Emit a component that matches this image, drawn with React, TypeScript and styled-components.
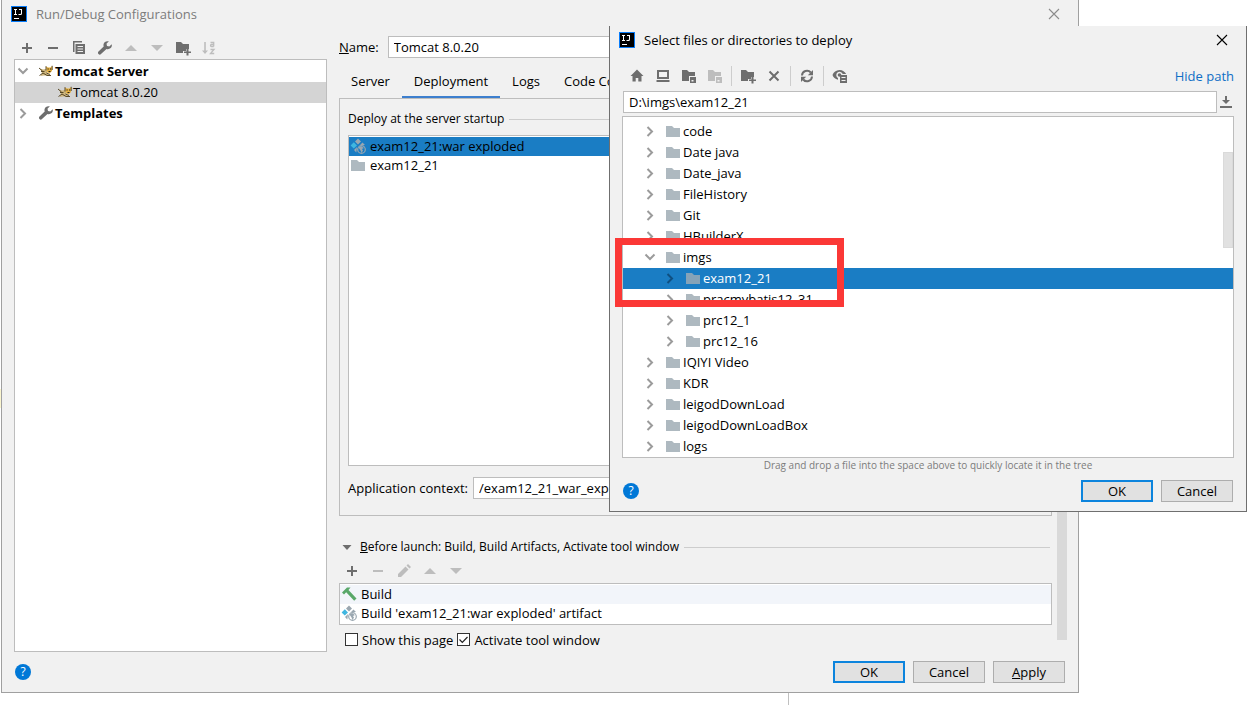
import React, { ReactNode } from "react";
import styled, { createGlobalStyle, css } from "styled-components";

const GlobalStyle = createGlobalStyle`
  * { box-sizing: border-box; }
  body {
    margin: 0;
    background: #ffffff;
    color: #000000;
    font-family: "Open Sans", "Noto Sans", sans-serif;
    font-size: 13px;
    line-height: 20px;
  }
  button, input { font: inherit; color: inherit; }
  ul { list-style: none; margin: 0; padding: 0; }
  svg { display: block; flex: none; }
`;

/* ---------- Icons ---------- */

const GREY = "#6e6e6e";
const MUTED = "#bdbdbd";

type IconProps = { color?: string };

const Svg = ({ children, size = 16 }: { children: ReactNode; size?: number }) => (
  <svg width={size} height={size} viewBox="0 0 16 16" aria-hidden="true">
    {children}
  </svg>
);

const IdeaLogo = () => (
  <Svg>
    <rect width="16" height="16" fill="#087cfa" />
    <rect x="1" y="1" width="14" height="14" fill="#000" />
    <path d="M3 3h3v1H5v4h1v1H3V8h1V4H3zM8 3h3v4.500q0 1.500-1.500 1.500H7.500V8h1.700q.8 0 .8-.8V4H8z" fill="#fff" />
    <path d="M3 12h5v1H3z" fill="#fff" />
  </Svg>
);

const Plus = ({ color = GREY }: IconProps) => (
  <Svg><path d="M7 3h2v4h4v2H9v4H7V9H3V7h4z" fill={color} /></Svg>
);
const Minus = ({ color = GREY }: IconProps) => (
  <Svg><path d="M3 7h10v2H3z" fill={color} /></Svg>
);
const Copy = () => (
  <Svg>
    <path d="M2 1h9v1.500H3.500V12H2z" fill={GREY} />
    <path fillRule="evenodd" d="M4.500 4H14v10H4.500zM6.500 6h5.500v1H6.500zM6.500 8.500h5.500v1H6.500zM6.500 11h5.500v1H6.500z" fill={GREY} />
  </Svg>
);
const Wrench = () => (
  <Svg>
    <path
      d="M14.700 4.200 12.300 6.500 10 6 9.500 3.700 11.900 1.300C10.400.9 8.700 1.200 7.600 2.300 6.500 3.400 6.200 5 6.700 6.400L1.500 11.600c-.7.7-.7 1.800 0 2.500s1.800.7 2.500 0L9.500 9c1.400.5 3 .2 4.200-.9 1.100-1.100 1.400-2.500 1-3.900z"
      fill={GREY}
    />
  </Svg>
);
const Up = () => <Svg><path d="M2 11 8 5l6 6z" fill={MUTED} /></Svg>;
const Down = () => <Svg><path d="M2 5h12l-6 6z" fill={MUTED} /></Svg>;
const FolderPlus = () => (
  <Svg>
    <path d="M1 2h5l2 2h6v5h-3v2H8v2H1z" fill={GREY} />
    <path d="M11.500 9h2v2.500H16v1.500h-2.500v2.500h-2V13H9v-1.500h2.500z" fill={GREY} />
  </Svg>
);
const FolderModule = ({ color = GREY }: IconProps) => (
  <Svg>
    <path d="M1 2h5l2 2h6v4H8v5H1z" fill={color} />
    <path fillRule="evenodd" d="M9 9h6v6H9zM10.500 12h2v1.500h-2z" fill={color} />
  </Svg>
);
const SortAz = () => (
  <Svg>
    <path d="M3.200 2h1.600v8.500H7L4 14 1 10.500h2.200z" fill={MUTED} />
    <path
      d="M9.500 2.500h3.200v4M12.700 4.500H10.500a1 1 0 0 0 0 2h2.200M9.500 9.500h3.500l-3.500 4h3.700"
      fill="none"
      stroke={MUTED}
      strokeWidth="1.300"
    />
  </Svg>
);
const Home = () => (
  <Svg><path d="M8 1.500 1.500 8H3.500v5.500h3.200V10h2.600v3.500h3.200V8h2z" fill={GREY} /></Svg>
);
const Desktop = () => (
  <Svg>
    <path fillRule="evenodd" d="M2 2h12v9H2zM4 4v5h8V4z" fill={GREY} />
    <path d="M1.500 12h13v2h-13z" fill={GREY} />
  </Svg>
);
const Delete = () => (
  <Svg><path d="m3.500 3.500 9 9m0-9-9 9" stroke={GREY} strokeWidth="2" /></Svg>
);
const Refresh = () => (
  <Svg>
    <path d="M3 7.500A5 5 0 0 1 11.800 4.500M13 8.500a5 5 0 0 1-8.800 3" fill="none" stroke={GREY} strokeWidth="2" />
    <path d="M14 2v5.200H8.800zM2 14V8.800h5.200z" fill={GREY} />
  </Svg>
);
const ShowHidden = () => (
  <Svg>
    <path
      fillRule="evenodd"
      d="M7.500 2C4 2 1.500 4.300.5 7c.8 2.300 2.700 4.200 5.500 4.800V10A3.300 3.300 0 1 1 10.700 6h3.500C13 3.800 10.600 2 7.500 2z"
      fill={GREY}
    />
    <circle cx="7.500" cy="7" r="1.800" fill={GREY} />
    <path fillRule="evenodd" d="M8 7h7v8H8zM9.500 9h4v1h-4zM9.500 12h4v1h-4z" fill={GREY} />
  </Svg>
);
const Download = () => (
  <Svg><path d="M7 2h2v4h3L8 10 4 6h3zM2 12h12v2H2z" fill={GREY} /></Svg>
);
const Pencil = () => (
  <Svg>
    <path d="M2 14v-3l7.500-7.500 3 3L5 14zM10.500 2.500 12 1l3 3-1.500 1.500z" fill={MUTED} />
  </Svg>
);
const Hammer = () => (
  <Svg>
    <path d="M1 6.500 6 1.500h3.500L7.500 4l8 8.500-2.300 2.300-8-8.500L3 8.500z" fill="#59a869" />
  </Svg>
);
const Artifact = () => (
  <Svg>
    <path d="m8 .5 3 3-3 3-3-3zM12.500 4.500 15 7h-5z" fill="#9aa7b0" />
    <path d="m3.800 4.200 3.200 3.200-3.200 3.200L.6 7.400z" fill="#40b6e0" />
    <path d="M7 9 6.300 14.500 4 12z" fill="#9aa7b0" />
    <circle cx="11.500" cy="11.500" r="3.800" fill="none" stroke="#9aa7b0" strokeWidth="1.200" />
    <path d="M8.500 9.500 11 8l3 2-2 1 1 1.500-1.500 2.500-1-2.500z" fill="#9aa7b0" />
  </Svg>
);
const Tomcat = () => (
  <Svg>
    <path d="M2 5.500 5 6.500 8 6l1.500 3.500 2 3H6L2.500 13 4 10z" fill="#cdb57c" />
    <path d="M8 3.500 10 4.500h2.500L14 3v5l-2.500 2.500L8.700 8.500z" fill="#e5b040" />
    <path
      d="M1 5 4.500 8M3 8.500h3.500M1.500 12.500 5 10l4 2.500h4M8.500 10l3.500 1.500M8 3.200v4.300M14.200 2.800V7"
      stroke="#4a3b1c"
      strokeWidth=".9"
      fill="none"
    />
    <path d="M9.500 6h1.200M12 6h1.200M10.500 8.500h2" stroke="#2e2410" strokeWidth="1" />
  </Svg>
);
const FolderIcon = ({ color = "#aeb9c0" }: IconProps) => (
  <Svg><path d="M1 3h6l2 2h6v9H1z" fill={color} /></Svg>
);
const Chevron = ({ open, color = "#9b9b9b" }: IconProps & { open?: boolean }) => (
  <Svg>
    <path d={open ? "m3.500 5.500 4.500 4.500L12.500 5.500" : "M5.500 4 10 8.500 5.500 13"} fill="none" stroke={color} strokeWidth="2" />
  </Svg>
);
const Triangle = () => (
  <Svg><path d="M3.500 6h9L8 11z" fill={GREY} /></Svg>
);
const Cross = ({ color = "#000" }: IconProps) => (
  <Svg><path d="m3 3 10 10M13 3 3 13" stroke={color} strokeWidth="1.100" /></Svg>
);

/* ---------- Shared parts ---------- */

const Screen = styled.main`
  position: relative;
  min-height: 100vh;
  overflow: hidden;
`;

const WindowFrame = styled.section`
  position: absolute;
  display: flex;
  flex-direction: column;
  background: #f1f1f1;
  border: 1px solid #a0a0a0;
  border-top: 0;
`;

const MainWindow = styled(WindowFrame)`
  top: 0;
  left: 1px;
  right: 170px;
  min-height: 693px;
`;

const DialogWindow = styled(WindowFrame)`
  top: 26px;
  left: 609px;
  right: 2px;
  border-color: #6f6f6f;
`;

const BackdropEdge = styled.div`
  position: absolute;
  top: 0;
  bottom: 0;
  left: 0;
  width: 789px;
  border-right: 1px solid #c0c0c0;
`;

const BackdropHighlight = styled.div`
  position: absolute;
  top: 389px;
  left: 0;
  width: 1px;
  height: 19px;
  background: #fbf6cf;
`;

const TitleBar = styled.header<{ $muted?: boolean }>`
  display: flex;
  align-items: center;
  gap: 9px;
  height: 28px;
  padding: 0 16px 0 9px;
  color: ${(p) => (p.$muted ? "#7c7c7c" : "#000")};
`;

const Title = styled.h1`
  flex: 1;
  margin: 0;
  font-size: 13px;
  font-weight: 400;
`;

const IconButton = styled.button`
  display: flex;
  align-items: center;
  justify-content: center;
  width: 16px;
  height: 16px;
  padding: 0;
  border: 0;
  background: none;
`;

const Toolbar = styled.div`
  display: flex;
  align-items: center;
  gap: 10px;
  height: 24px;
  padding-left: 5px;
`;

const Divider = styled.span`
  width: 1px;
  height: 20px;
  margin: 0 -2px;
  background: #cdcdcd;
`;

const TextInput = styled.input`
  flex: 1;
  min-width: 0;
  height: 22px;
  padding: 0 5px 1px;
  border: 1px solid #bdbdbd;
  border-radius: 0;
  background: #fff;
  outline: 0;
`;

const PushButton = styled.button<{ $primary?: boolean }>`
  width: 72px;
  height: 22px;
  padding: 0;
  line-height: 16px;
  border: 1px solid #adadad;
  background: #e1e1e1;
  ${(p) => p.$primary && css`border: 2px solid #0c84dd;`}
`;

const ButtonRow = styled.footer`
  display: flex;
  align-items: center;
  gap: 8px;
`;

const HelpButton = styled.button`
  width: 16px;
  height: 16px;
  margin-right: auto;
  padding: 0;
  border: 0;
  border-radius: 50%;
  background: #0078d7;
  color: #fff;
  font-size: 12px;
  line-height: 16px;
`;

const Tree = styled.ul`
  border: 1px solid #bdbdbd;
  background: #fff;
`;

const Row = styled.li<{ $depth?: number; $fill?: string; $light?: boolean; $bold?: boolean }>`
  display: flex;
  align-items: center;
  height: 21px;
  padding-bottom: 1px;
  white-space: nowrap;
  font-weight: ${(p) => (p.$bold ? 700 : 400)};
  color: ${(p) => (p.$light ? "#fff" : "#000")};
  background: ${(p) => p.$fill ?? "transparent"};
`;

/* ---------- Main window ---------- */

const Body = styled.div`
  display: flex;
  flex: 1;
  gap: 12px;
  padding: 8px 11px 0 12px;
`;

const ConfigColumn = styled.nav`
  display: flex;
  flex-direction: column;
  width: 313px;
  flex: none;
`;

const ConfigToolbar = styled(Toolbar)`
  height: 23px;
`;

const ConfigTree = styled(Tree)`
  flex: 1;
  padding: 1px 0;
`;

const ConfigRow = styled(Row)`
  gap: ${(p) => (p.$depth ? 0 : 1)}px;
  padding-left: ${(p) => (p.$depth ? 42 : 0)}px;
`;

const IconCell = styled.span`
  display: flex;
  margin-right: 6px;
`;

const SettingsColumn = styled.div`
  flex: 1;
  min-width: 0;
  display: flex;
  flex-direction: column;
`;

const ScrollTrack = styled.div`
  width: 10px;
  margin: 80px 0 12px -7px;
  background: #d9d9d9;
`;

const Field = styled.div<{ $gap: number }>`
  display: flex;
  align-items: center;
  gap: ${(p) => p.$gap}px;
  height: 22px;
`;

const Tabs = styled.div`
  display: flex;
  height: 41px;
  padding-top: 8px;
  margin-bottom: -1px;
`;

const Tab = styled.button<{ $active?: boolean }>`
  padding: 0 12px;
  border: 0;
  border-bottom: 3px solid ${(p) => (p.$active ? "#3d7fce" : "transparent")};
  background: none;
  white-space: nowrap;
`;

const Panel = styled.div`
  display: flex;
  flex-direction: column;
  height: 418px;
  padding: 10px 8px 16px;
  border: 1px solid #bdbdbd;
`;

const GroupTitle = styled.h2`
  display: flex;
  align-items: center;
  gap: 5px;
  margin: 0;
  padding-right: 2px;
  font-size: 12px;
  font-weight: 400;
  white-space: nowrap;
  &::after {
    content: "";
    flex: 1;
    height: 1px;
    background: #cdcdcd;
  }
`;

const ArtifactList = styled(Tree)`
  flex: 1;
  margin: 6px 0 11px;
  padding-top: 1px;
`;

const ListRow = styled(Row)`
  height: 19px;
  gap: 4px;
  padding-left: 1px;
`;

const BeforeLaunch = styled.section`
  padding-top: 21px;
`;

const TaskToolbar = styled(Toolbar)`
  height: 26px;
  padding-top: 2px;
`;

const TaskList = styled(Tree)`
  padding: 1px 0;
`;

const CheckRow = styled.div`
  display: flex;
  align-items: center;
  gap: 4px;
  height: 27px;
  padding: 2px 0 0 6px;
`;

const CheckLabel = styled.label`
  display: flex;
  align-items: center;
  gap: 4px;
`;

const Checkbox = styled.input`
  appearance: none;
  width: 13px;
  height: 13px;
  margin: 0;
  border: 1px solid #333;
  background: #fff;
  &:checked {
    background: #fff
      url("data:image/svg+xml,%3Csvg xmlns='http://www.w3.org/2000/svg' viewBox='0 0 11 11'%3E%3Cpath d='M1.500 5.500 4.300 8.300 9.500 3' fill='none' stroke='%23222' stroke-width='1.200'/%3E%3C/svg%3E");
  }
`;

const MainFooter = styled(ButtonRow)`
  height: 40px;
  padding: 0 13px;
`;

/* ---------- File chooser ---------- */

const ChooserBody = styled.div`
  padding: 0 12px;
`;

const ChooserToolbar = styled(Toolbar)`
  height: 37px;
  padding: 7px 0 0 7px;
`;

const HidePath = styled.a`
  margin-left: auto;
  color: #0f6fc6;
  text-decoration: none;
`;

const PathRow = styled.div`
  display: flex;
  align-items: center;
  gap: 1px;
  padding-left: 1px;
  margin-bottom: 3px;
`;

const FileTree = styled(Tree)`
  position: relative;
  padding-top: 4px;
`;

const FileRow = styled(Row)`
  gap: 2px;
  padding-left: ${(p) => 19 + (p.$depth ?? 0) * 20}px;
`;

const FileIcon = styled.span`
  display: flex;
  padding-left: 5px;
`;

const ScrollThumb = styled.span`
  position: absolute;
  top: 35px;
  right: 0;
  width: 10px;
  height: 96px;
  border: 1px solid #dadada;
  background: #e1e1e1;
`;

const Hint = styled.p`
  margin: 0;
  color: #7c7c7c;
  font-size: 10px;
  line-height: 14px;
  text-align: center;
`;

const ChooserFooter = styled(ButtonRow)`
  height: 39px;
  padding: 0 1px 1px 1px;
`;

const Marker = styled.div`
  position: absolute;
  top: 212px;
  left: 5px;
  width: 229px;
  height: 69px;
  border: 7px solid #fb3836;
  pointer-events: none;
`;

type FileNode = { name: string; depth?: number; open?: boolean; selected?: boolean };

const files: FileNode[] = [
  { name: "code" },
  { name: "Date java" },
  { name: "Date_java" },
  { name: "FileHistory" },
  { name: "Git" },
  { name: "HBuilderX" },
  { name: "imgs", open: true },
  { name: "exam12_21", depth: 1, selected: true },
  { name: "pracmybatis12_31", depth: 1 },
  { name: "prc12_1", depth: 1 },
  { name: "prc12_16", depth: 1 },
  { name: "IQIYI Video" },
  { name: "KDR" },
  { name: "leigodDownLoad" },
  { name: "leigodDownLoadBox" },
  { name: "logs" },
];

const Tool = ({ label, children }: { label: string; children: ReactNode }) => (
  <IconButton type="button" aria-label={label}>{children}</IconButton>
);

function RunConfigurations() {
  return (
    <MainWindow aria-label="Run/Debug Configurations">
      <TitleBar $muted>
        <IdeaLogo />
        <Title>Run/Debug Configurations</Title>
        <Tool label="Close"><Cross color="#8c8c8c" /></Tool>
      </TitleBar>
      <Body>
        <ConfigColumn>
          <ConfigToolbar>
            <Tool label="Add"><Plus /></Tool>
            <Tool label="Remove"><Minus /></Tool>
            <Tool label="Copy"><Copy /></Tool>
            <Tool label="Edit templates"><Wrench /></Tool>
            <Tool label="Move up"><Up /></Tool>
            <Tool label="Move down"><Down /></Tool>
            <Tool label="New folder"><FolderPlus /></Tool>
            <Tool label="Sort"><SortAz /></Tool>
          </ConfigToolbar>
          <ConfigTree>
            <ConfigRow $bold>
              <IconCell><Chevron open /></IconCell>
              <Tomcat />Tomcat Server
            </ConfigRow>
            <ConfigRow $depth={1} $fill="#d4d4d4"><Tomcat />Tomcat 8.0.20</ConfigRow>
            <ConfigRow $bold>
              <IconCell><Chevron /></IconCell>
              <Wrench />Templates
            </ConfigRow>
          </ConfigTree>
        </ConfigColumn>
        <SettingsColumn>
          <Field $gap={9}>
            <label htmlFor="name"><u>N</u>ame:</label>
            <TextInput id="name" defaultValue="Tomcat 8.0.20" />
          </Field>
          <Tabs>
            <Tab type="button">Server</Tab>
            <Tab type="button" $active>Deployment</Tab>
            <Tab type="button">Logs</Tab>
            <Tab type="button">Code Coverage</Tab>
          </Tabs>
          <Panel>
            <GroupTitle>Deploy at the server startup</GroupTitle>
            <ArtifactList>
              <ListRow $fill="#1a7dc4"><Artifact />exam12_21:war exploded</ListRow>
              <ListRow><FolderIcon />exam12_21</ListRow>
            </ArtifactList>
            <Field $gap={5}>
              <label htmlFor="context">Application context:</label>
              <TextInput id="context" defaultValue="/exam12_21_war_exploded" />
            </Field>
          </Panel>
          <BeforeLaunch>
            <GroupTitle>
              <Triangle />
              <span><u>B</u>efore launch: Build, Build Artifacts, Activate tool window</span>
            </GroupTitle>
            <TaskToolbar>
              <Tool label="Add task"><Plus /></Tool>
              <Tool label="Remove task"><Minus color={MUTED} /></Tool>
              <Tool label="Edit task"><Pencil /></Tool>
              <Tool label="Move task up"><Up /></Tool>
              <Tool label="Move task down"><Down /></Tool>
            </TaskToolbar>
            <TaskList>
              <ListRow $fill="#f2f5fa"><Hammer />Build</ListRow>
              <ListRow><Artifact />Build 'exam12_21:war exploded' artifact</ListRow>
            </TaskList>
            <CheckRow>
              <CheckLabel><Checkbox type="checkbox" />Show this page</CheckLabel>
              <CheckLabel><Checkbox type="checkbox" defaultChecked />Activate tool window</CheckLabel>
            </CheckRow>
          </BeforeLaunch>
        </SettingsColumn>
        <ScrollTrack />
      </Body>
      <MainFooter>
        <HelpButton type="button" aria-label="Help">?</HelpButton>
        <PushButton type="button" $primary>OK</PushButton>
        <PushButton type="button">Cancel</PushButton>
        <PushButton type="button"><u>A</u>pply</PushButton>
      </MainFooter>
    </MainWindow>
  );
}

function FileChooser() {
  return (
    <DialogWindow role="dialog" aria-label="Select files or directories to deploy">
      <TitleBar>
        <IdeaLogo />
        <Title>Select files or directories to deploy</Title>
        <Tool label="Close"><Cross /></Tool>
      </TitleBar>
      <ChooserBody>
        <ChooserToolbar>
          <Tool label="Home"><Home /></Tool>
          <Tool label="Desktop"><Desktop /></Tool>
          <Tool label="Project"><FolderModule /></Tool>
          <Tool label="Module"><FolderModule color={MUTED} /></Tool>
          <Divider />
          <Tool label="New folder"><FolderPlus /></Tool>
          <Tool label="Delete"><Delete /></Tool>
          <Divider />
          <Tool label="Refresh"><Refresh /></Tool>
          <Divider />
          <Tool label="Show hidden files"><ShowHidden /></Tool>
          <HidePath href="#path">Hide path</HidePath>
        </ChooserToolbar>
        <PathRow>
          <TextInput id="path" aria-label="Path" defaultValue="D:\imgs\exam12_21" />
          <Tool label="Recent paths"><Download /></Tool>
        </PathRow>
        <FileTree>
          {files.map((f) => (
            <FileRow key={f.name} $depth={f.depth} $light={f.selected} $fill={f.selected ? "#1a7dc4" : undefined}>
              <Chevron open={f.open} color={f.selected ? "#0f4f80" : undefined} />
              <FileIcon><FolderIcon color={f.selected ? "#86a3b8" : undefined} /></FileIcon>
              {f.name}
            </FileRow>
          ))}
          <ScrollThumb />
        </FileTree>
        <Hint>Drag and drop a file into the space above to quickly locate it in the tree</Hint>
        <ChooserFooter>
          <HelpButton type="button" aria-label="Help">?</HelpButton>
          <PushButton type="button" $primary>OK</PushButton>
          <PushButton type="button">Cancel</PushButton>
        </ChooserFooter>
      </ChooserBody>
      <Marker />
    </DialogWindow>
  );
}

export default function App() {
  return (
    <Screen>
      <GlobalStyle />
      <BackdropEdge />
      <BackdropHighlight />
      <RunConfigurations />
      <FileChooser />
    </Screen>
  );
}
